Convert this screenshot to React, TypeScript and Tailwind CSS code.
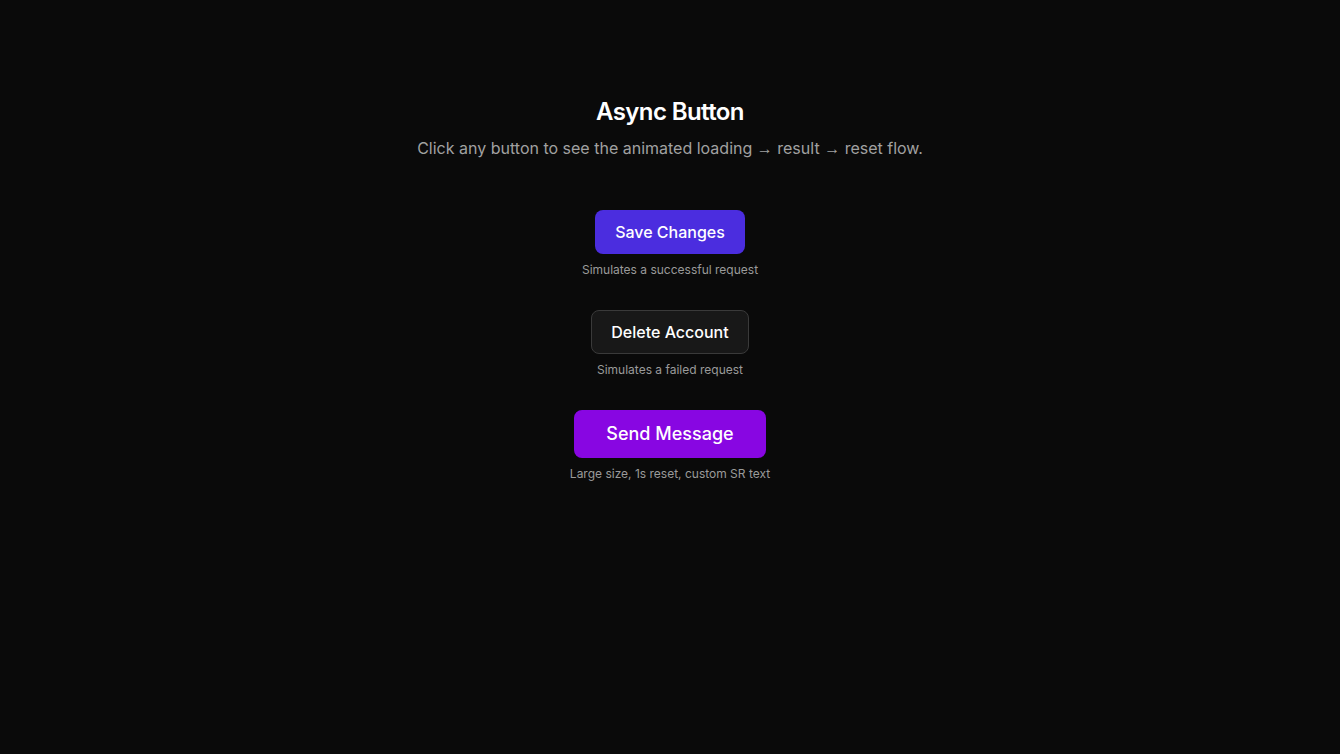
export default function App() {
	const items = [
		{
			label: "Save Changes",
			caption: "Simulates a successful request",
			className: "bg-[#4b2ddf] text-white px-5 py-2.5 text-base",
		},
		{
			label: "Delete Account",
			caption: "Simulates a failed request",
			className: "bg-[#181818] border border-[#3a3a3a] text-white px-[19px] py-[9px] text-base",
		},
		{
			label: "Send Message",
			caption: "Large size, 1s reset, custom SR text",
			className: "bg-[#8806e2] text-white px-8 py-2.5 text-lg",
		},
	];

	const arrow = <span style={{ fontFamily: "'Liberation Sans', sans-serif" }}>→</span>;

	return (
		<div
			className="min-h-screen w-full bg-[#0a0a0a] flex flex-col items-center pt-[96px]"
			style={{ fontFamily: "Inter, 'Noto Sans', sans-serif" }}
		>
			<h1 className="text-2xl font-semibold text-white tracking-tight">Async Button</h1>
			<p className="mt-2 text-base text-[#a1a1a1]">
				Click any button to see the animated loading {arrow} result {arrow} reset flow.
			</p>
			<div className="mt-[49px] flex flex-col items-center gap-8">
				{items.map(item => (
					<div key={item.label} className="flex flex-col items-center gap-2">
						<button className={"rounded-lg font-medium " + item.className}>
							{item.label}
						</button>
						<span className="text-xs text-[#9a9a9a]">{item.caption}</span>
					</div>
				))}
			</div>
		</div>
	);
}
